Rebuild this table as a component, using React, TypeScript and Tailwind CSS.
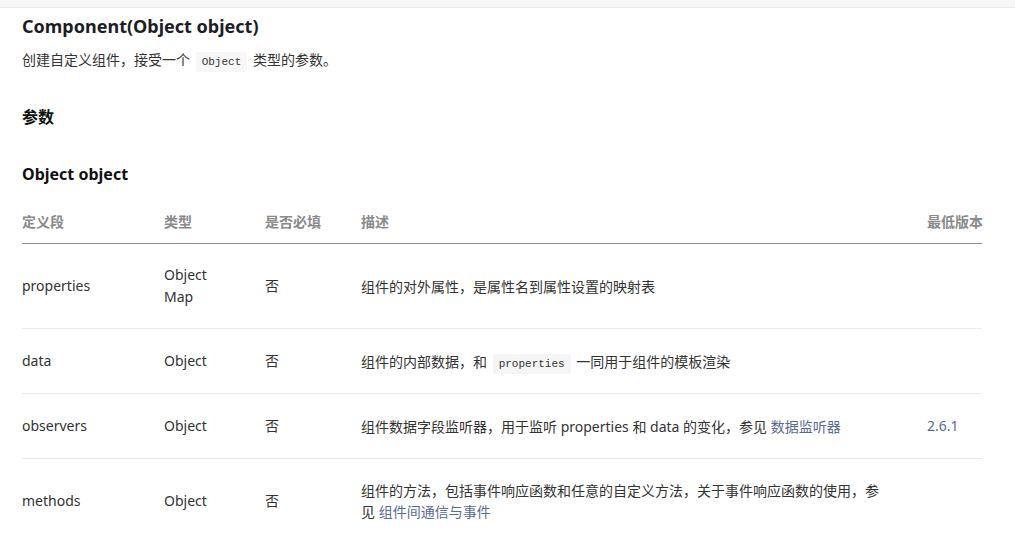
const rows = [
  {
    name: "properties",
    type: ["Object", "Map"],
    required: "否",
    desc: <>组件的对外属性，是属性名到属性设置的映射表</>,
    version: "",
  },
  {
    name: "data",
    type: ["Object"],
    required: "否",
    desc: (
      <>
        组件的内部数据，和{" "}
        <code className="mx-[2px] rounded-[3px] bg-[#f5f5f5] px-[6px] py-[4px] font-['Liberation_Mono','DejaVu_Sans_Mono',monospace] text-[11px] leading-none text-[#333]">
          properties
        </code>{" "}
        一同用于组件的模板渲染
      </>
    ),
    version: "",
  },
  {
    name: "observers",
    type: ["Object"],
    required: "否",
    desc: (
      <>
        组件数据字段监听器，用于监听 properties 和 data 的变化，参见{" "}
        <a className="text-[#576b95]">数据监听器</a>
      </>
    ),
    version: "2.6.1",
  },
  {
    name: "methods",
    type: ["Object"],
    required: "否",
    desc: (
      <>
        组件的方法，包括事件响应函数和任意的自定义方法，关于事件响应函数的使用，参见{" "}
        <a className="text-[#576b95]">组件间通信与事件</a>
      </>
    ),
    version: "",
  },
];

export default function App() {
  return (
    <div className="min-h-screen bg-white font-['Noto_Sans','Noto_Sans_CJK_SC',sans-serif] text-[#333]">
      <div className="h-[8px] border-b border-[#ececec] bg-[#f7f7f8]" />
      <main className="pl-[22px] pr-[33px]">
        <h1 className="mt-[5px] text-[18px] font-bold leading-[26px] text-[#1d1d26]">
          Component(Object object)
        </h1>
        <p className="mt-[10px] text-[14px] leading-[22px]">
          创建自定义组件，接受一个{" "}
          <code className="mx-[2px] rounded-[3px] bg-[#f7f7f7] px-[6px] py-[4px] font-['Liberation_Mono','DejaVu_Sans_Mono',monospace] text-[11px] leading-none text-[#333]">
            Object
          </code>{" "}
          类型的参数。
        </p>

        <h2 className="mt-[34px] text-[16px] font-bold leading-[24px] text-[#111]">参数</h2>
        <h3 className="mt-[33px] text-[16px] font-bold leading-[24px] text-[#111]">Object object</h3>

        <table className="mt-[25px] w-full table-fixed border-collapse text-left">
          <colgroup>
            <col className="w-[142px]" />
            <col className="w-[101px]" />
            <col className="w-[96px]" />
            <col />
            <col className="w-[55px]" />
          </colgroup>
          <thead>
            <tr className="border-b border-[#8c8c8c] text-[14px] text-[#8a8a8a]">
              <th className="pb-[10px] font-semibold leading-[22px]">定义段</th>
              <th className="pb-[10px] font-semibold leading-[22px]">类型</th>
              <th className="pb-[10px] font-semibold leading-[22px]">是否必填</th>
              <th className="pb-[10px] font-semibold leading-[22px]">描述</th>
              <th className="whitespace-nowrap pb-[10px] font-semibold leading-[22px]">最低版本</th>
            </tr>
          </thead>
          <tbody>
            {rows.map((r) => (
              <tr key={r.name} className="border-b border-[#ebebeb] align-middle">
                <td className="py-[21px] text-[14px] leading-[22px]">{r.name}</td>
                <td className="py-[20px] text-[14px] leading-[22px]">
                  {r.type.map((t) => (
                    <div key={t}>{t}</div>
                  ))}
                </td>
                <td className="py-[21px] text-[14px] leading-[22px]">{r.required}</td>
                <td className="py-[21px] text-[14px] leading-[21px]">
                  <div className="max-w-[524px]">{r.desc}</div>
                </td>
                <td className="py-[21px] text-[14px] leading-[22px] text-[#576b95]">{r.version}</td>
              </tr>
            ))}
          </tbody>
        </table>
      </main>
    </div>
  );
}
